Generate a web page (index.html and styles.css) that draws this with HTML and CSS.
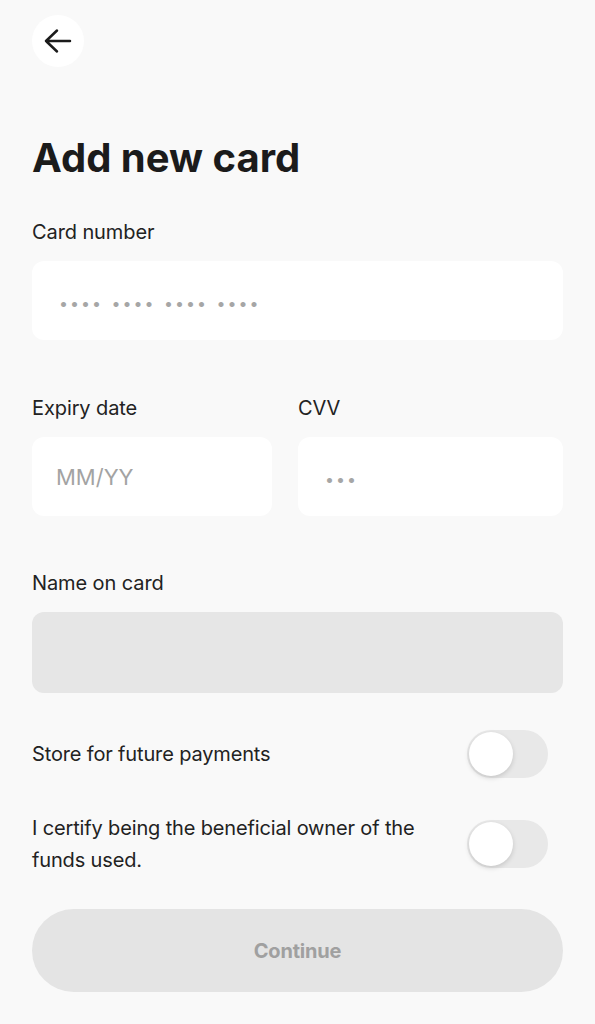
FILE: index.html
```html
<!DOCTYPE html>
<html lang="en">
<head>
    <meta charset="UTF-8">
    <meta name="viewport" content="width=device-width, initial-scale=1.0">
    <title>Add new card</title>
    <link rel="stylesheet" href="styles.css">
</head>
<body>
    <div class="page">
        <button class="back" type="button" aria-label="Back">
            <svg width="52" height="52" viewBox="0 0 52 52" fill="none">
                <path d="M14 26H38M25 15.5L14 26L25 36.5" stroke="#1b1b1b" stroke-width="2.5" stroke-linecap="round" stroke-linejoin="round"/>
            </svg>
        </button>

        <h1>Add new card</h1>

        <form class="card-form">
            <label for="cardNumber">Card number</label>
            <input class="field dots" type="text" id="cardNumber" placeholder="•••• •••• •••• ••••">

            <div class="row-two">
                <div class="col">
                    <label for="expiry">Expiry date</label>
                    <input class="field" type="text" id="expiry" placeholder="MM/YY">
                </div>
                <div class="col">
                    <label for="cvv">CVV</label>
                    <input class="field dots" type="text" id="cvv" placeholder="•••">
                </div>
            </div>

            <label for="nameOnCard">Name on card</label>
            <input class="field field-grey" type="text" id="nameOnCard">

            <div class="switch-row first">
                <span class="switch-text">Store for future payments</span>
                <span class="switch"><span class="knob"></span></span>
            </div>

            <div class="switch-row">
                <span class="switch-text">I certify being the beneficial owner of the funds used.</span>
                <span class="switch"><span class="knob"></span></span>
            </div>

            <button class="continue" type="submit" disabled>Continue</button>
        </form>
    </div>
</body>
</html>
```

FILE: styles.css
```css
body {
    font-family: Inter, "Noto Sans", sans-serif;
    background-color: #f9f9f9;
    color: #1b1b1b;
    margin: 0;
}

.page {
    padding: 15px 32px 32px;
}

.back {
    width: 52px;
    height: 52px;
    border-radius: 50%;
    border: none;
    background: white;
    padding: 0;
    display: flex;
    align-items: center;
    justify-content: center;
}

h1 {
    font-size: 40px;
    line-height: 48px;
    font-weight: 700;
    letter-spacing: 0;
    margin: 67px 0 0;
}

.card-form {
    display: flex;
    flex-direction: column;
    margin-top: 38px;
}

label {
    display: block;
    font-size: 20px;
    line-height: 24px;
    letter-spacing: -0.1px;
    color: #222;
    margin-bottom: 17px;
}

.field {
    box-sizing: border-box;
    width: 100%;
    height: 79px;
    border: none;
    border-radius: 12px;
    background: white;
    padding: 0 24px;
    font-family: inherit;
    font-size: 22px;
    color: #1b1b1b;
    outline: none;
}

.field::placeholder {
    color: #a3a3a3;
}

.dots {
    padding-left: 27px;
}

.dots::placeholder {
    font-size: 16px;
    letter-spacing: 2px;
    word-spacing: 2px;
    color: #a6a6a6;
}

.row-two {
    display: grid;
    grid-template-columns: 240px 1fr;
    gap: 26px;
    margin-top: 56px;
}

.row-two + label {
    margin-top: 55px;
}

.field-grey {
    background: #e6e6e6;
    height: 81px;
}

.switch-row {
    display: flex;
    align-items: center;
    justify-content: space-between;
    gap: 40px;
    padding-right: 15px;
    margin-top: 34px;
}

.switch-row.first {
    margin-top: 37px;
}

.switch-text {
    font-size: 20px;
    line-height: 32px;
    letter-spacing: -0.15px;
    color: #222;
}

.switch {
    flex: none;
    width: 81px;
    height: 48px;
    border-radius: 24px;
    background: #e8e8e8;
    position: relative;
}

.knob {
    position: absolute;
    left: 2px;
    top: 2px;
    width: 44px;
    height: 44px;
    border-radius: 50%;
    background: white;
    box-shadow: 0 2px 5px rgba(0, 0, 0, 0.15);
}

.continue {
    margin-top: 33px;
    height: 83px;
    border: none;
    border-radius: 42px;
    background: #e4e4e4;
    color: #a0a0a0;
    font-family: inherit;
    font-size: 20px;
    font-weight: 700;
    letter-spacing: -0.2px;
}
```
